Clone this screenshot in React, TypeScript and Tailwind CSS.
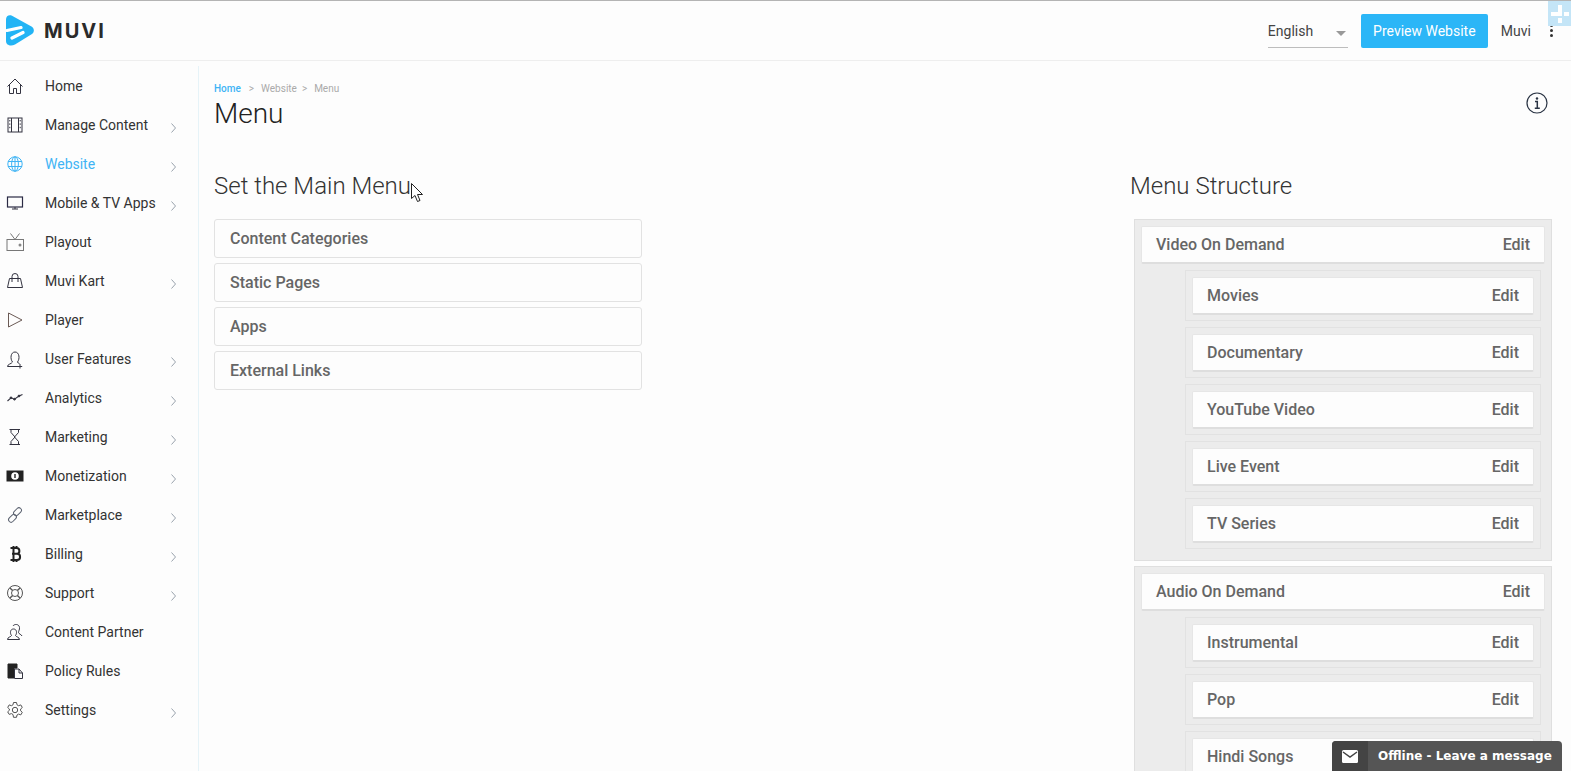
import type { ReactNode } from "react";

const S = ({ children }: { children: ReactNode }) => (
  <svg width="20" height="20" viewBox="0 0 20 20" fill="none" stroke="#333340" strokeWidth="1" className="shrink-0">
    {children}
  </svg>
);

const icons: Record<string, ReactNode> = {
  home: (
    <S>
      <path d="M2.5 10.5 10 3l7.5 7.5M4.5 9v8.5h4v-5h3v5h4V9" />
    </S>
  ),
  film: (
    <S>
      <rect x="3" y="3" width="14" height="14" />
      <path d="M6.5 3v14M13.5 3v14" />
      <path d="M4.8 5v10M15.2 5v10" strokeDasharray="1.4 2" />
    </S>
  ),
  globe: (
    <S>
      <g stroke="#3fb4f5">
        <circle cx="10" cy="10" r="7.2" />
        <ellipse cx="10" cy="10" rx="3.4" ry="7.2" />
        <path d="M10 2.8v14.4M3 7.5h14M3 12.5h14" />
      </g>
    </S>
  ),
  tv: (
    <S>
      <rect x="2.5" y="4" width="15" height="10" stroke="#2a2a44" strokeWidth="1.2" />
      <path d="M7 16h6M10 14v2" />
    </S>
  ),
  playout: (
    <S>
      <g stroke="#777">
        <rect x="2" y="7.500" width="16.500" height="11" />
        <path d="m5.500 1.500 4.500 6 4.500-6" />
      </g>
      <circle cx="15" cy="13" r="1.500" fill="#888" stroke="none" />
    </S>
  ),
  bag: (
    <S>
      <path d="M4.500 7.500h11l2 9h-15zM7 11V5.500a3 3 0 0 1 6 0V11" />
    </S>
  ),
  play: (
    <S>
      <path d="M3.500 3v14L17 10z" stroke="#6b5a55" />
    </S>
  ),
  user: (
    <S>
      <path d="M2.500 17.500c0-2.500 4-2.500 5-4.500C5 10 5.500 3 10 3s5 7 2.500 10c.2.800 1 1.300 2 1.600M2.500 17.500H15M15 15v4.500M12.800 17.500h4.400" />
    </S>
  ),
  chart: (
    <S>
      <path d="m2.500 13 3.500-3.200 3.500 1.400L14 8l3.500-1.500" strokeWidth="1.100" />
      <circle cx="6" cy="9.800" r=".9" fill="#333" />
      <circle cx="9.500" cy="11.200" r=".9" fill="#333" />
      <circle cx="14" cy="8" r=".9" fill="#333" />
    </S>
  ),
  hourglass: (
    <S>
      <path d="M4.500 2.500h10.500M4.500 17.500h10.500M6 2.500v3l4 4.500-4 4.500v3M13.500 2.500v3l-4 4.500 4 4.500v3" />
    </S>
  ),
  money: (
    <S>
      <rect x="2" y="5" width="16" height="10" fill="#222" stroke="#222" />
      <circle cx="10" cy="10" r="3.800" fill="#fff" stroke="none" />
      <path d="M10 8v4" stroke="#222" strokeWidth="1.400" />
    </S>
  ),
  link: (
    <S>
      <g stroke="#5b6270">
        <rect x="10" y="2.200" width="5" height="9" rx="2.500" transform="rotate(45 12.500 6.700)" />
        <rect x="5" y="8.800" width="5" height="9" rx="2.500" transform="rotate(45 7.500 13.300)" />
      </g>
    </S>
  ),
  btc: (
    <S>
      <path
        d="M7 4h4.500a2.800 2.800 0 0 1 0 5.800H7h5a3 3 0 0 1 0 6.200H7M8.500 4v12M8.500 2V4M11.500 2V4M8.500 16v2M11.500 16v2M5.500 4H8M5.500 16H8"
        stroke="#222"
        strokeWidth="2"
      />
    </S>
  ),
  support: (
    <S>
      <circle cx="10" cy="10" r="7.500" stroke="#555" />
      <circle cx="10" cy="10" r="3.500" stroke="#555" />
      <path d="m4.700 4.700 2.900 2.900M15.300 4.700l-2.900 2.900M4.700 15.300l2.900-2.900M15.300 15.300l-2.900-2.900" stroke="#555" strokeWidth="1.400" />
    </S>
  ),
  partner: (
    <S>
      <path d="M2.500 17.500c0-2.500 3.500-2.500 4-4-1.600-2-1.600-6.500 2-6.500s3.600 4.500 2 6.500c.5 1.500 4 1.500 4 4z" />
      <path d="M8 4c1-2 6-2.500 6.500 1.500.3 2-1 3.500-1 5 .3 1.500 3 2 3.500 3.500" />
    </S>
  ),
  policy: (
    <S>
      <path d="M3 3h9v4H9v10H3z" fill="#222" stroke="#222" />
      <path d="M9.500 8H14l3.500 4v5.500h-8zM14 8v4h3.500" />
    </S>
  ),
  gear: (
    <S>
      <path
        d="m8.500 2.500h3l.5 2.300 1.600.9 2.200-.8 1.500 2.600-1.700 1.500v1.800l1.700 1.500-1.500 2.600-2.200-.8-1.600.9-.5 2.300h-3L8 14.500l-1.600-.9-2.200.8-1.500-2.600 1.700-1.500V9L2.700 7.500l1.500-2.600 2.200.8L8 4.800z"
        stroke="#555"
      />
      <circle cx="10" cy="10" r="2.700" stroke="#555" />
    </S>
  ),
};

const navItems = [
  { label: "Home", icon: "home" },
  { label: "Manage Content", icon: "film", arrow: true },
  { label: "Website", icon: "globe", arrow: true, active: true },
  { label: "Mobile & TV Apps", icon: "tv", arrow: true },
  { label: "Playout", icon: "playout" },
  { label: "Muvi Kart", icon: "bag", arrow: true },
  { label: "Player", icon: "play" },
  { label: "User Features", icon: "user", arrow: true },
  { label: "Analytics", icon: "chart", arrow: true },
  { label: "Marketing", icon: "hourglass", arrow: true },
  { label: "Monetization", icon: "money", arrow: true },
  { label: "Marketplace", icon: "link", arrow: true },
  { label: "Billing", icon: "btc", arrow: true },
  { label: "Support", icon: "support", arrow: true },
  { label: "Content Partner", icon: "partner" },
  { label: "Policy Rules", icon: "policy" },
  { label: "Settings", icon: "gear", arrow: true },
];

const menuTree = [
  { name: "Video On Demand", kids: ["Movies", "Documentary", "YouTube Video", "Live Event", "TV Series"] },
  { name: "Audio On Demand", kids: ["Instrumental", "Pop", "Hindi Songs"] },
];

function MenuCard({ name, edit = true }: { name: string; edit?: boolean }) {
  return (
    <div className="flex h-[38px] items-center justify-between rounded-[2px] border border-b-2 border-[#e6e6e6] border-b-[#dedede] bg-[#fdfdfd] px-[14px] pt-[1px] text-base font-medium text-[#666]">
      <span>{name}</span>
      {edit && <span>Edit</span>}
    </div>
  );
}

function Logo() {
  return (
    <div className="flex items-center">
      <svg width="28" height="31" viewBox="0 0 28 31" className="ml-[6px]">
        <path
          d="M0 4.500C0 1 3 -.5 6 .8L25.500 11.500C28.500 13.500 28.500 17 26 19L9 29.500C5 31.500 0 30.500 0 26Z"
          fill="#22b4f5"
        />
        <path d="M1 15.500 15 12.500M6 23l11-5.500" stroke="#fff" strokeWidth="3.200" strokeLinecap="round" />
      </svg>
      <span className="ml-[10px] font-['Inter',sans-serif] text-[20px] leading-none font-bold tracking-[0.1em] text-[#2b2b2b]">MUVI</span>
    </div>
  );
}

export default function App() {
  return (
    <div className="relative h-[771px] w-[1571px] overflow-hidden bg-[#fdfdfd] font-['Roboto',sans-serif] text-[#333]">
      <header className="flex h-[61px] items-center justify-between border-t border-b border-t-[#b4b4b4] border-b-[#eeeeee] pr-[18px]">
        <Logo />
        <div className="flex items-center">
          <div className="mt-[1px] flex h-[34px] w-[80px] items-center justify-between border-b border-[#bdbdbd] pr-[2px] text-sm text-[#444]">
            <span>English</span>
            <span className="mt-[6px] h-0 w-0 border-x-[5px] border-t-[5px] border-x-transparent border-t-[#999]" />
          </div>
          <button className="ml-[13px] h-[34px] w-[127px] rounded-[2px] bg-[#2bb6f7] text-sm text-white">Preview Website</button>
          <span className="ml-[13px] text-sm text-[#444]">Muvi</span>
          <span className="ml-[19px] flex w-[3px] flex-col gap-[2px]">
            <i className="h-[3px] w-[3px] rounded-full bg-[#333]" />
            <i className="h-[3px] w-[3px] rounded-full bg-[#333]" />
            <i className="h-[3px] w-[3px] rounded-full bg-[#333]" />
          </span>
        </div>
      </header>

      {/* little widget stuck in the corner */}
      <div className="absolute top-[1px] right-0 h-[25px] w-[23px] bg-[#c4e5f7]">
        <div className="absolute top-[4px] left-[10px] h-[11px] w-[4px] bg-white" />
        <div className="absolute top-[11px] left-[3px] h-[4px] w-[7px] bg-white" />
        <div className="absolute top-[11px] left-[16px] h-[4px] w-[5px] bg-white" />
        <div className="absolute top-[17px] left-[10px] h-[5px] w-[4px] bg-white" />
      </div>

      <div className="flex">
        <aside className="mt-[5px] h-[705px] w-[199px] shrink-0 border-r border-[#e6f3f8]">
          <nav className="flex flex-col">
            {navItems.map((item) => (
              <div key={item.label} className="relative flex h-[39px] items-center pl-[5px]">
                {icons[item.icon]}
                <span className={`ml-[20px] text-sm ${item.active ? "text-[#3fb4f5]" : "text-[#333]"}`}>{item.label}</span>
                {item.arrow && (
                  <svg width="8" height="12" viewBox="0 0 8 12" fill="none" stroke="#9aa3ad" className="absolute top-[17px] left-[170px]">
                    <path d="m1.500 1.500 4 4.500-4 4.500" />
                  </svg>
                )}
              </div>
            ))}
          </nav>
        </aside>

        <main className="min-w-0 flex-1 pt-[21px] pl-[15px]">
          <div className="flex items-start justify-between pr-[23px]">
            <div>
              <div className="flex items-center text-[10px] leading-[14px] text-[#aaa]">
                <span className="font-medium text-[#3fb4f5]">Home</span>
                <span className="ml-[8px]">&gt;</span>
                <span className="ml-[7px]">Website</span>
                <span className="ml-[5px]">&gt;</span>
                <span className="ml-[7px]">Menu</span>
              </div>
              <h1 className="text-[28px] leading-[35px] font-light text-[#222]">Menu</h1>
            </div>
            <svg width="22" height="22" viewBox="0 0 22 22" fill="none" stroke="#2a3444" className="mt-[10px]">
              <circle cx="11" cy="11" r="10" strokeWidth="1.200" />
              <circle cx="11" cy="6.500" r="1.200" fill="#2a3444" stroke="none" />
              <path d="M9 9.500h2.300V16M8.800 16.300h5" strokeWidth="1.500" />
            </svg>
          </div>

          <div className="mt-[38px] flex justify-between">
            <div className="w-[428px]">
              <h2 className="text-2xl leading-[34px] font-light text-[#333]">Set the Main Menu</h2>
              <div className="mt-[16px] flex flex-col gap-[5px]">
                {["Content Categories", "Static Pages", "Apps", "External Links"].map((t) => (
                  <div key={t} className="flex h-[39px] items-center rounded-[3px] border border-[#e2e2e2] px-[15px] text-base font-medium text-[#666]">
                    {t}
                  </div>
                ))}
              </div>
            </div>

            <div className="w-[443px] shrink-0 pl-[2px]">
              <h2 className="text-2xl leading-[34px] font-light text-[#333]">Menu Structure</h2>
              <div className="mt-[16px] ml-[4px] flex w-[418px] flex-col gap-[5px]">
                {menuTree.map((group) => (
                  <div key={group.name} className="flex flex-col gap-[6px] border border-[#dfdfdf] bg-[#ececec] px-[6px] pt-[6px] pb-[11px]">
                    <MenuCard name={group.name} />
                    {group.kids.map((kid) => (
                      <div key={kid} className="mr-[4px] ml-[44px] border border-[#e2e2e2] px-[6px] pt-[6px] pb-[5px]">
                        {/* the chat tab covers the last row's Edit in the picture */}
                        <MenuCard name={kid} edit={kid !== "Hindi Songs"} />
                      </div>
                    ))}
                  </div>
                ))}
              </div>
            </div>
          </div>
        </main>
      </div>

      {/* mouse pointer captured in the screenshot */}
      <svg width="14" height="22" viewBox="0 0 14 22" className="absolute top-[183px] left-[411px]" fill="#fff" stroke="#222">
        <path d="M.5.500v15l3.500-3 2.500 6 2.500-1-2.500-6h5z" />
      </svg>

      <div className="absolute right-[9px] bottom-0 flex h-[30px] w-[230px] items-center overflow-hidden rounded-t-[4px] bg-[#555] font-['DejaVu_Sans',sans-serif] text-white">
        <div className="flex h-full w-[36px] items-center justify-center bg-[#444]">
          <svg width="16" height="13" viewBox="0 0 16 13">
            <rect width="16" height="13" rx="1.500" fill="#fff" />
            <path d="m1 2 7 5 7-5" fill="none" stroke="#444" strokeWidth="1.500" />
          </svg>
        </div>
        <span className="ml-[10px] text-xs font-bold whitespace-nowrap">Offline - Leave a message</span>
      </div>
    </div>
  );
}
